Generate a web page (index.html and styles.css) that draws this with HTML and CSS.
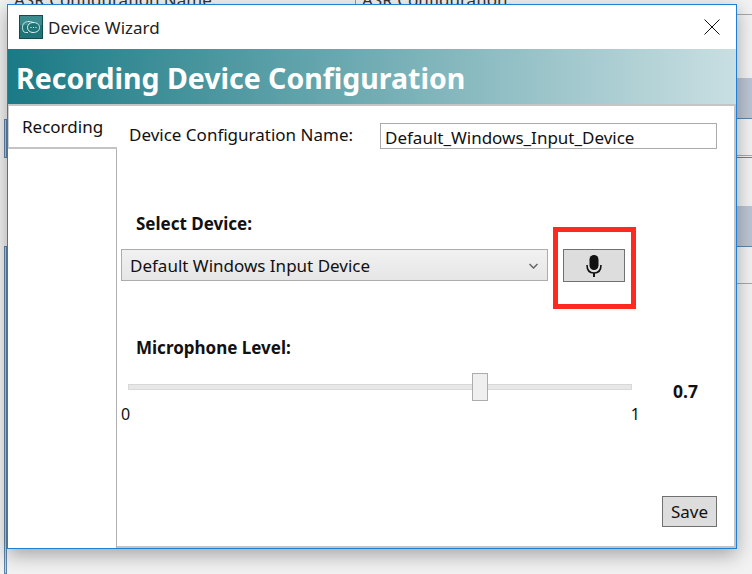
FILE: index.html
```html
<!DOCTYPE html>
<html lang="en">
<head>
    <meta charset="UTF-8">
    <title>Device Wizard</title>
    <link rel="stylesheet" href="styles.css">
</head>
<body>
    <!-- app behind the dialog -->
    <div class="back-app">
        <div class="back-title">ASR Configuration Name:</div>
        <div class="back-title-2">ASR Configuration:</div>
        <div class="back-line line-1"></div>
        <div class="back-band band-1"></div>
        <div class="back-line line-2"></div>
        <div class="back-line line-3"></div>
        <div class="back-band band-2"></div>
        <div class="back-line line-4"></div>
        <div class="back-edge edge-1"></div>
        <div class="back-edge edge-2"></div>
    </div>

    <div class="dialog">
        <div class="title-bar">
            <svg class="app-icon" width="24" height="24" viewBox="0 0 24 24">
                <rect x="0.5" y="0.5" width="23" height="23" fill="#1f7478" stroke="#134c50"/>
                <rect x="1" y="1" width="22" height="9" fill="#4d9a9c" opacity="0.6"/>
                <path d="M9 17.500H6.500C4.500 17.500 3.500 15.500 3.500 12.500C3.500 8.500 6 6.500 10 6.500C12 6.500 13.500 7 14.500 8" fill="none" stroke="#cfe5e5" stroke-width="1"/>
                <path d="M14 7.500C18 7.500 20.500 9.500 20.500 12.500C20.500 15.500 18 17.500 14 17.500C11 17.500 8.500 15.500 8.500 12.500C8.500 9.500 11 7.500 14 7.500Z" fill="#1f7478" stroke="#e4f2f2" stroke-width="1"/>
                <path d="M11.500 12.500H12.500M14 12.500H15M16.500 12.500H17.500" stroke="#fff" stroke-width="1"/>
            </svg>
            <div class="title-text">Device Wizard</div>
            <svg class="close-icon" width="16" height="16" viewBox="0 0 16 16">
                <path d="M0.500 0.500L15.500 15.500M15.500 0.500L0.500 15.500" stroke="#111" stroke-width="1" fill="none"/>
            </svg>
        </div>

        <div class="banner">Recording Device Configuration</div>

        <div class="dialog-body">
            <div class="tab-column">
                <div class="tab">Recording</div>
            </div>

            <div class="panel">
                <div class="name-row">
                    <div class="name-label">Device Configuration Name:</div>
                    <div class="name-input">Default_Windows_Input_Device</div>
                </div>

                <div class="section-label select-label">Select Device:</div>
                <div class="device-row">
                    <div class="device-select">
                        <span>Default Windows Input Device</span>
                        <svg width="9" height="6" viewBox="0 0 9 6">
                            <path d="M0.500 1L4.500 5L8.500 1" stroke="#666" stroke-width="1.500" fill="none"/>
                        </svg>
                    </div>
                    <div class="mic-button">
                        <svg width="16" height="22" viewBox="0 0 16 22">
                            <rect x="3.500" y="0" width="9" height="15" rx="4.500" fill="#111"/>
                            <path d="M1 10C1 15.500 4 18 8 18C12 18 15 15.500 15 10" stroke="#111" stroke-width="1.600" fill="none"/>
                            <path d="M8 18V22" stroke="#111" stroke-width="2"/>
                        </svg>
                    </div>
                </div>

                <div class="section-label level-label">Microphone Level:</div>
                <div class="slider-row">
                    <div class="slider">
                        <div class="slider-track"></div>
                        <div class="slider-thumb"></div>
                    </div>
                    <div class="slider-value">0.7</div>
                </div>
                <div class="slider-scale">
                    <span>0</span>
                    <span>1</span>
                </div>

                <div class="actions">
                    <div class="save-button">Save</div>
                </div>

                <!-- red callout drawn on the screenshot -->
                <div class="callout"></div>
            </div>
        </div>
    </div>
</body>
</html>
```

FILE: styles.css
```css
* {
    margin: 0;
    padding: 0;
    box-sizing: border-box;
    font-family: "Noto Sans", "Open Sans", sans-serif;
}

body {
    width: 752px;
    height: 574px;
    background-color: #f2f2f2;
    position: relative;
    overflow: hidden;
    color: #111;
    font-size: 17px;
}

.back-title {
    position: absolute;
    left: 14px;
    top: -12px;
    font-size: 17px;
    color: #333;
}

.back-title-2 {
    position: absolute;
    left: 355px;
    top: -12px;
    padding-left: 6px;
    font-size: 17px;
    color: #333;
    border-left: 1px solid #999;
}

.back-line {
    position: absolute;
    left: 737px;
    width: 15px;
    height: 1px;
    background-color: #a8a8a8;
}

.line-1 {
    top: 14px;
}

.line-2 {
    top: 155px;
}

.line-3 {
    top: 157px;
    background-color: #5f84aa;
}

.line-4 {
    top: 283px;
}

.back-band {
    position: absolute;
    left: 737px;
    width: 15px;
    height: 41px;
    background-color: #bcc5d4;
    border-bottom: 1px solid #5f84aa;
}

.band-1 {
    top: 78px;
}

.band-2 {
    top: 206px;
}

.back-edge {
    position: absolute;
    left: 4px;
    width: 3px;
    border: 1px solid #5f84aa;
    background-color: #c4ccd8;
}

.edge-1 {
    top: 119px;
    height: 39px;
}

.edge-2 {
    top: 246px;
    height: 328px;
}

.dialog {
    position: absolute;
    left: 7px;
    top: 4px;
    width: 730px;
    height: 545px;
    background-color: white;
    border: 1px solid #1e7fd8;
    box-shadow: 0 6px 18px rgba(0, 0, 0, 0.32);
    display: flex;
    flex-direction: column;
}

.title-bar {
    height: 44px;
    display: flex;
    align-items: center;
    flex-shrink: 0;
    padding-left: 11px;
    padding-right: 16px;
}

.app-icon {
    margin-right: 5px;
}

.title-text {
    flex: 1;
    color: #222;
}

.close-icon {
    display: block;
}

.banner {
    height: 55px;
    flex-shrink: 0;
    background: linear-gradient(to right, #1a7a85, #c9dfe2);
    color: white;
    font-size: 28.500px;
    font-weight: bold;
    padding-left: 8px;
    line-height: 58px;
}

.dialog-body {
    flex: 1;
    display: flex;
    border-top: 2px solid #c4c4c4;
    min-height: 0;
}

.tab-column {
    width: 109px;
    flex-shrink: 0;
    border-right: 1px solid #b0b0b0;
}

/* one px wider than the column so it covers the border next to the panel */
.tab {
    height: 43px;
    width: 109px;
    background-color: white;
    border-left: 1px solid #cfcfcf;
    border-bottom: 2px solid #c4c4c4;
    padding-left: 13px;
    padding-top: 9px;
}

.panel {
    flex: 1;
    position: relative;
    border-right: 2px solid #c4c4c4;
    border-bottom: 2px solid #c4c4c4;
    padding-left: 4px;
    padding-right: 17px;
    display: flex;
    flex-direction: column;
}

.name-row {
    display: flex;
    justify-content: space-between;
    margin-top: 17px;
    height: 26px;
    padding-left: 8px;
}

.name-label {
    line-height: 24px;
}

.name-input {
    width: 337px;
    height: 26px;
    border: 1px solid #ababab;
    padding-left: 4px;
    line-height: 27px;
}

.section-label {
    font-weight: bold;
    line-height: 22px;
    padding-left: 15px;
}

.select-label {
    margin-top: 64px;
}

.device-row {
    display: flex;
    align-items: flex-start;
    margin-top: 14px;
}

.device-select {
    width: 427px;
    height: 32px;
    border: 1px solid #acacac;
    background: linear-gradient(to bottom, #f1f1f1, #e6e6e6);
    display: flex;
    justify-content: space-between;
    align-items: center;
    padding-top: 1px;
    padding-left: 8px;
    padding-right: 9px;
}

.mic-button {
    width: 62px;
    height: 33px;
    margin-left: 15px;
    border: 1px solid #707070;
    background-color: #dddddd;
    display: flex;
    align-items: center;
    justify-content: center;
}

.level-label {
    margin-top: 55px;
}

.slider-row {
    display: flex;
    align-items: center;
    margin-top: 12px;
}

.slider {
    width: 504px;
    height: 28px;
    margin-left: 7px;
    position: relative;
    display: flex;
    align-items: center;
}

.slider-track {
    width: 100%;
    height: 6px;
    background-color: #e7e7e7;
    border: 1px solid #d8d8d8;
}

.slider-thumb {
    position: absolute;
    left: 344px;
    top: 0;
    width: 16px;
    height: 28px;
    background-color: #efefef;
    border: 1px solid #acacac;
}

.slider-value {
    margin-left: 41px;
    font-weight: bold;
    font-size: 17.500px;
    margin-top: 8px;
}

.slider-scale {
    width: 519px;
    display: flex;
    justify-content: space-between;
    font-size: 16px;
    line-height: 22px;
}

.actions {
    flex: 1;
    display: flex;
    justify-content: flex-end;
    align-items: flex-end;
    padding-bottom: 19px;
}

.save-button {
    width: 55px;
    height: 31px;
    background-color: #dddddd;
    border: 1px solid #707070;
    text-align: center;
    line-height: 29px;
}

.callout {
    position: absolute;
    left: 436px;
    top: 121px;
    width: 83px;
    height: 82px;
    border: 5px solid #ff2a1f;
}
```
